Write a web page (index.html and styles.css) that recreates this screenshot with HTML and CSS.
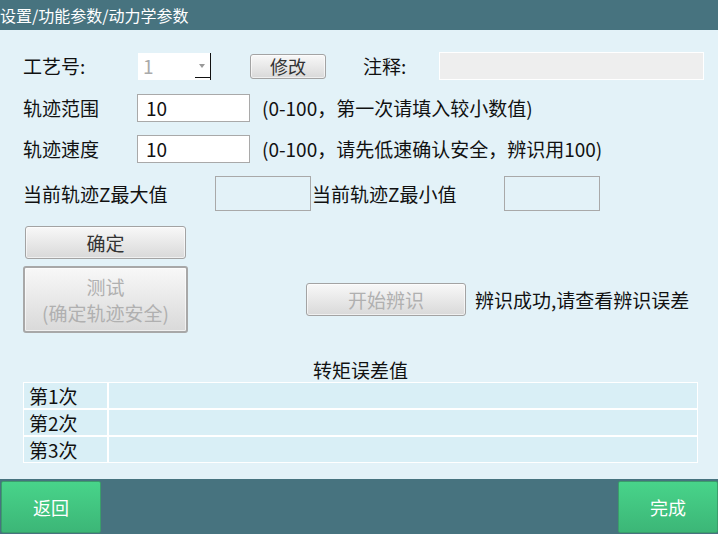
FILE: index.html
```html
<!DOCTYPE html>
<html lang="zh-CN">
<head>
<meta charset="utf-8">
<title>动力学参数</title>
<link rel="stylesheet" href="styles.css">
</head>
<body>
<div class="app">
  <header class="titlebar">设置/功能参数/动力学参数</header>
  <main class="content">
    <div class="row row1">
      <span class="label l-proc">工艺号:</span>
      <div class="combo">
        <span class="combo-val">1</span>
        <span class="combo-arrow"></span>
      </div>
      <button class="btn btn-modify">修改</button>
      <span class="label l-note">注释:</span>
      <div class="note-input"></div>
    </div>
    <div class="row row2">
      <span class="label l-field">轨迹范围</span>
      <div class="input">10</div>
      <span class="hint">(0-100，第一次请填入较小数值)</span>
    </div>
    <div class="row row3">
      <span class="label l-field">轨迹速度</span>
      <div class="input">10</div>
      <span class="hint">(0-100，请先低速确认安全，辨识用100)</span>
    </div>
    <div class="row row4">
      <span class="label l-z1">当前轨迹Z最大值</span>
      <div class="zbox"></div>
      <span class="label l-z2">当前轨迹Z最小值</span>
      <div class="zbox"></div>
    </div>
    <div class="row row5">
      <button class="btn btn-ok">确定</button>
    </div>
    <div class="row row6">
      <button class="btn btn-test disabled"><span class="tl">测试</span><span class="tl">(确定轨迹安全)</span></button>
      <button class="btn btn-ident disabled">开始辨识</button>
      <span class="status">辨识成功,请查看辨识误差</span>
    </div>
    <div class="torque">
      <div class="caption">转矩误差值</div>
      <table class="err-table">
        <tr><td class="c1">第1次</td><td class="c2"></td></tr>
        <tr><td class="c1">第2次</td><td class="c2"></td></tr>
        <tr><td class="c1">第3次</td><td class="c2"></td></tr>
      </table>
    </div>
  </main>
  <footer class="footer">
    <button class="gbtn">返回</button>
    <button class="gbtn">完成</button>
  </footer>
</div>
</body>
</html>
```

FILE: styles.css
```css
* { box-sizing: border-box; }
html, body {
  margin: 0;
  padding: 0;
  width: 718px;
  height: 534px;
  overflow: hidden;
}
body {
  font-family: "Noto Sans CJK SC", "Microsoft YaHei", sans-serif;
  color: #111;
  background: #e3f2f8;
}
.app {
  display: flex;
  flex-direction: column;
  width: 718px;
  height: 534px;
}
.titlebar {
  height: 30px;
  background: #47737f;
  color: #fff;
  font-size: 16px;
  line-height: 30px;
  white-space: nowrap;
}
.content {
  flex: 1;
  background: #e3f2f8;
  padding: 22px 20px 0 23px;
  display: flex;
  flex-direction: column;
}
.row {
  display: flex;
  align-items: center;
}
.row > * { flex-shrink: 0; }
.label, .hint, .status {
  font-size: 19px;
  line-height: 22px;
  white-space: nowrap;
}
.row1 { height: 28px; }
.l-proc { width: 115px; }
.combo {
  position: relative;
  width: 73px;
  height: 27px;
  background: #fff;
  border-right: 1px solid #111;
  margin-top: 1px;
}
.combo::after {
  content: "";
  position: absolute;
  right: 0;
  bottom: 2px;
  width: 15px;
  border-bottom: 1px solid #111;
}
.combo-val {
  position: absolute;
  left: 5px;
  top: 2px;
  font-size: 19px;
  line-height: 22px;
  color: #aaa;
}
.combo-arrow {
  position: absolute;
  right: 5px;
  top: 11px;
  width: 0;
  height: 0;
  border-left: 3px solid transparent;
  border-right: 3px solid transparent;
  border-top: 4px solid #999;
}
.btn {
  font-family: inherit;
  font-size: 19px;
  line-height: 20px;
  color: #333;
  background: linear-gradient(#f8f8f8, #d9d9d9);
  border: 1px solid #a3a3a3;
  border-radius: 3px;
  padding: 0;
  box-shadow: inset 0 0 0 1px rgba(255,255,255,0.6);
}
.btn.disabled { color: #b0b0b0; }
.btn-modify {
  width: 76px;
  height: 25px;
  margin-left: 39px;
  font-size: 18px;
}
.l-note { width: 76px; margin-left: 37px; }
.note-input {
  width: 265px;
  height: 28px;
  background: #eeeeee;
  border: 1px solid #ffffff;
}
.row2 { margin-top: 14px; height: 28px; }
.row3 { margin-top: 13px; height: 28px; }
.l-field { width: 114px; }
.input {
  width: 113px;
  height: 28px;
  background: #fff;
  border: 1px solid #a9a9a9;
  font-size: 19px;
  line-height: 26px;
  padding-left: 8px;
}
.hint { margin-left: 12px; }
.row4 { margin-top: 13px; height: 35px; }
.l-z1 { width: 192px; }
.l-z2 { width: 193px; padding-left: 1px; }
.zbox {
  width: 96px;
  height: 35px;
  border: 1px solid #a9a9a9;
}
.row5 { margin-top: 15px; }
.btn-ok {
  width: 161px;
  height: 33px;
  margin-left: 2px;
}
.row6 { margin-top: 7px; height: 67px; }
.btn-test {
  width: 165px;
  height: 67px;
  border-width: 2px;
  border-color: #a8a8a8;
  display: flex;
  flex-direction: column;
  align-items: center;
  justify-content: center;
  gap: 6px;
}
.btn-test .tl {
  display: block;
  line-height: 20px;
  height: 20px;
}
.btn-ident {
  width: 160px;
  height: 33px;
  margin-left: 118px;
}
.status { margin-left: 9px; }
.torque {
  margin-top: 26px;
  width: 675px;
}
.caption {
  text-align: center;
  font-size: 19px;
  line-height: 22px;
  height: 23px;
}
.err-table {
  width: 675px;
  border-collapse: separate;
  border-spacing: 0;
}
.err-table td {
  height: 27px;
  border: 1px solid #fff;
  background: #d9eff6;
  font-size: 19px;
  line-height: 22px;
  padding: 0;
}
.err-table .c1 { width: 85px; padding-left: 5px; }
.footer {
  height: 55px;
  background: #47737f;
  display: flex;
  justify-content: space-between;
  align-items: flex-start;
  padding: 2px 0 0 1px;
}
.gbtn {
  width: 100px;
  height: 52px;
  font-family: inherit;
  font-size: 18px;
  color: #fff;
  background: linear-gradient(#48d48a, #3cb677);
  border: 1px solid #3a9e6b;
  border-radius: 2px;
  padding: 0;
}
```
